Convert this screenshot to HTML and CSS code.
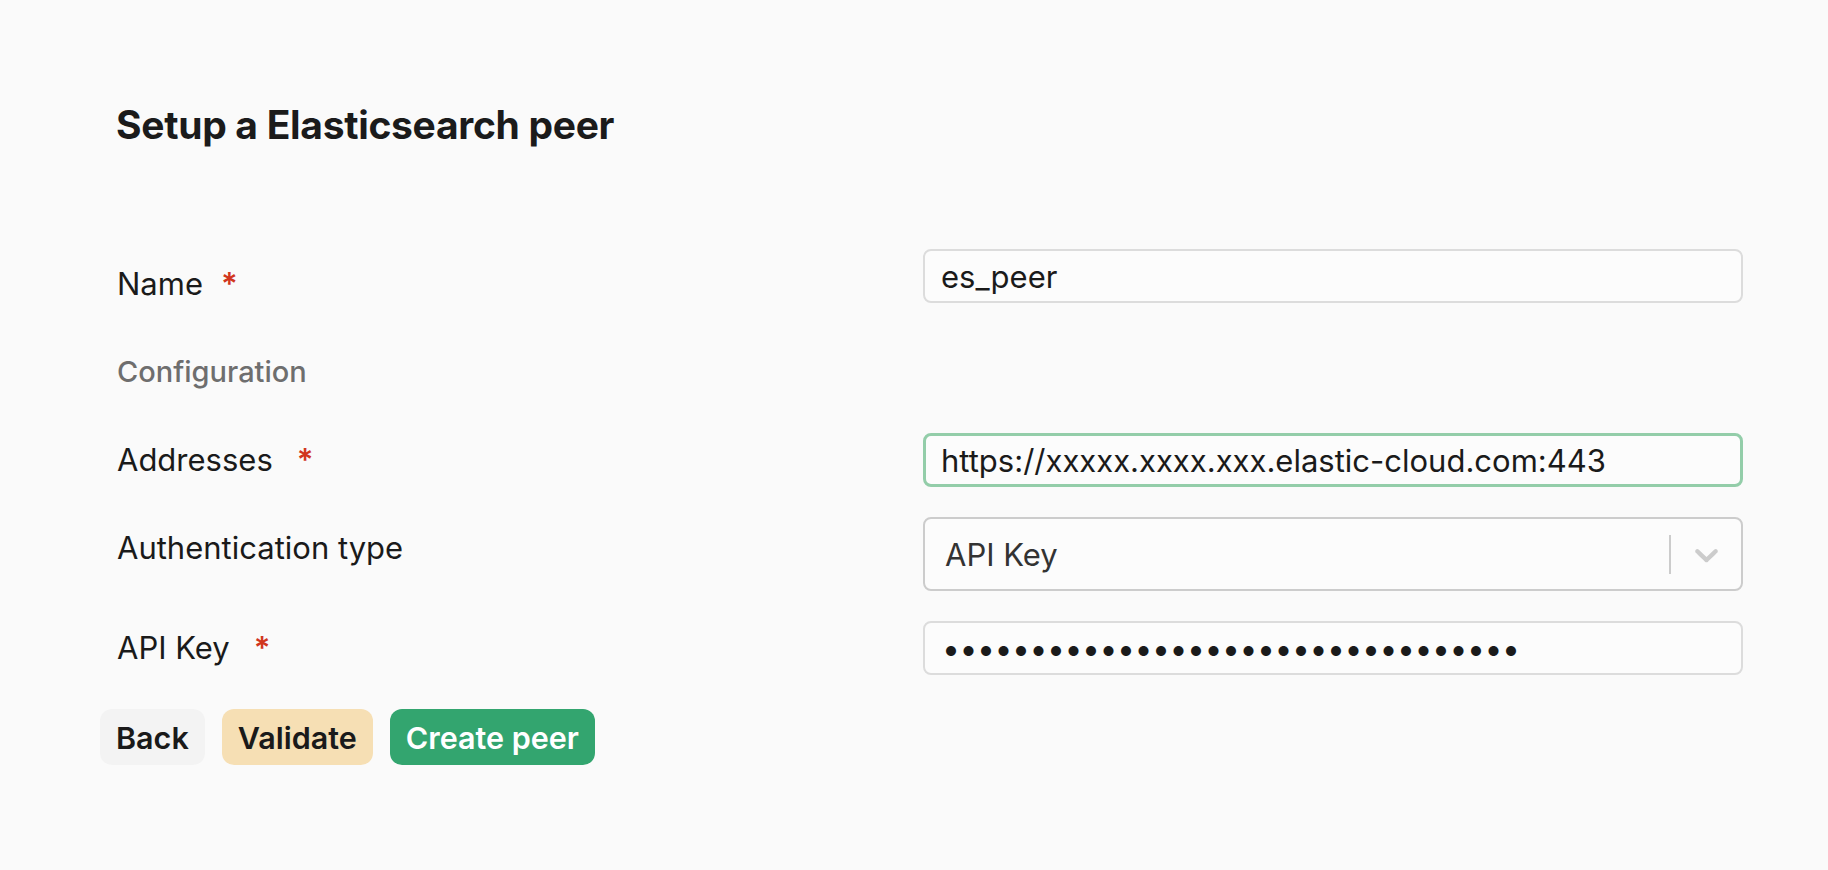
FILE: index.html
```html
<!DOCTYPE html>
<html lang="en">
<head>
<meta charset="utf-8">
<title>Setup a Elasticsearch peer</title>
<link rel="stylesheet" href="styles.css">
</head>
<body>
<main class="page">
  <h1 class="title">Setup a Elasticsearch peer</h1>
  <form class="form">
    <div class="row">
      <label class="label label--name" for="name">Name<span class="req req--near">*</span></label>
      <input class="field" id="name" type="text" value="es_peer">
    </div>
    <div class="section">Configuration</div>
    <div class="row">
      <label class="label" for="addr">Addresses<span class="req">*</span></label>
      <input class="field field--focus" id="addr" type="text" value="https://xxxxx.xxxx.xxx.elastic-cloud.com:443">
    </div>
    <div class="row">
      <label class="label label--auth">Authentication type</label>
      <div class="select">
        <div class="select__value">API Key</div>
        <div class="select__indicators">
          <span class="select__sep"></span>
          <span class="select__arrow">
            <svg viewBox="0 0 20 20" width="39" height="39" aria-hidden="true"><path d="M4.516 7.548c0.436-0.446 1.043-0.481 1.576 0l3.908 3.747 3.908-3.747c0.533-0.481 1.141-0.446 1.574 0 0.436 0.445 0.408 1.197 0 1.615-0.406 0.418-4.695 4.502-4.695 4.502-0.217 0.223-0.502 0.335-0.787 0.335s-0.57-0.112-0.789-0.335c0 0-4.287-4.084-4.695-4.502s-0.436-1.17 0-1.615z"/></svg>
          </span>
        </div>
      </div>
    </div>
    <div class="row">
      <label class="label" for="key">API Key<span class="req">*</span></label>
      <input class="field field--secret" id="key" type="password" value="abcdefghijklmnopqrstuvwxyz0123456">
    </div>
  </form>
  <div class="actions">
    <button class="btn btn--back" type="button">Back</button>
    <button class="btn btn--validate" type="button">Validate</button>
    <button class="btn btn--create" type="button">Create peer</button>
  </div>
</main>
</body>
</html>
```

FILE: styles.css
```css
* { box-sizing: border-box; }

html, body {
  margin: 0;
  background: #fafafa;
  font-family: Inter, "Noto Sans", "Liberation Sans", sans-serif;
  color: #1a1a1a;
}

.page {
  padding: 102px 85px 0 100px;
}

.title {
  margin: 0;
  padding-left: 16px;
  font-size: 39px;
  line-height: 46px;
  font-weight: 700;
  color: #1b1b1b;
  letter-spacing: -0.3px;
}

.form {
  margin-top: 101px;
  padding-left: 17px;
  display: flex;
  flex-direction: column;
  gap: 30px;
}

.row {
  display: flex;
  align-items: center;
}

.label {
  width: 806px;
  flex: none;
  font-size: 31px;
  line-height: 36px;
  color: #1a1a1a;
}

.label--name { padding-top: 16px; }
.label--auth { padding-bottom: 12px; }

.req {
  margin-left: 24px;
  color: #d1361e;
  font-weight: 600;
}

.req--near { margin-left: 18px; }

.section {
  margin: 21px 0 13px;
  font-size: 29px;
  line-height: 36px;
  font-weight: 500;
  color: #6e6e6e;
}

.field {
  width: 820px;
  height: 54px;
  padding: 0 16px;
  border: 2px solid #dcdcdc;
  border-radius: 8px;
  background: #fcfcfc;
  font-family: inherit;
  font-size: 31px;
  color: #1a1a1a;
  outline: none;
}

.field--focus {
  border: 3px solid #93cda9;
  padding: 0 15px;
}

.field--secret {
  font-size: 32px;
  letter-spacing: -0.5px;
  padding-left: 17px;
}

.select {
  width: 820px;
  height: 74px;
  display: flex;
  align-items: center;
  border: 2px solid #cccccc;
  border-radius: 8px;
  background: #fcfcfc;
}

.select__value {
  flex: 1;
  padding-left: 20px;
  font-size: 31px;
  color: #333333;
}

.select__indicators {
  display: flex;
  align-items: center;
  align-self: stretch;
}

.select__sep {
  width: 2px;
  height: 39px;
  background: #cccccc;
}

.select__arrow {
  display: flex;
  padding: 0 15px 0 16px;
}

.select__arrow svg {
  fill: #cccccc;
}

.actions {
  margin-top: 34px;
  display: flex;
  gap: 17px;
}

.btn {
  height: 56px;
  padding: 0 16px;
  border: none;
  border-radius: 12px;
  font-family: inherit;
  font-size: 30.5px;
  font-weight: 600;
  color: #1a1a1a;
  cursor: pointer;
}

.btn--back { background: #f3f3f3; }
.btn--validate { background: #f6dfb4; }
.btn--create { background: #33a56f; color: #ffffff; }
```
